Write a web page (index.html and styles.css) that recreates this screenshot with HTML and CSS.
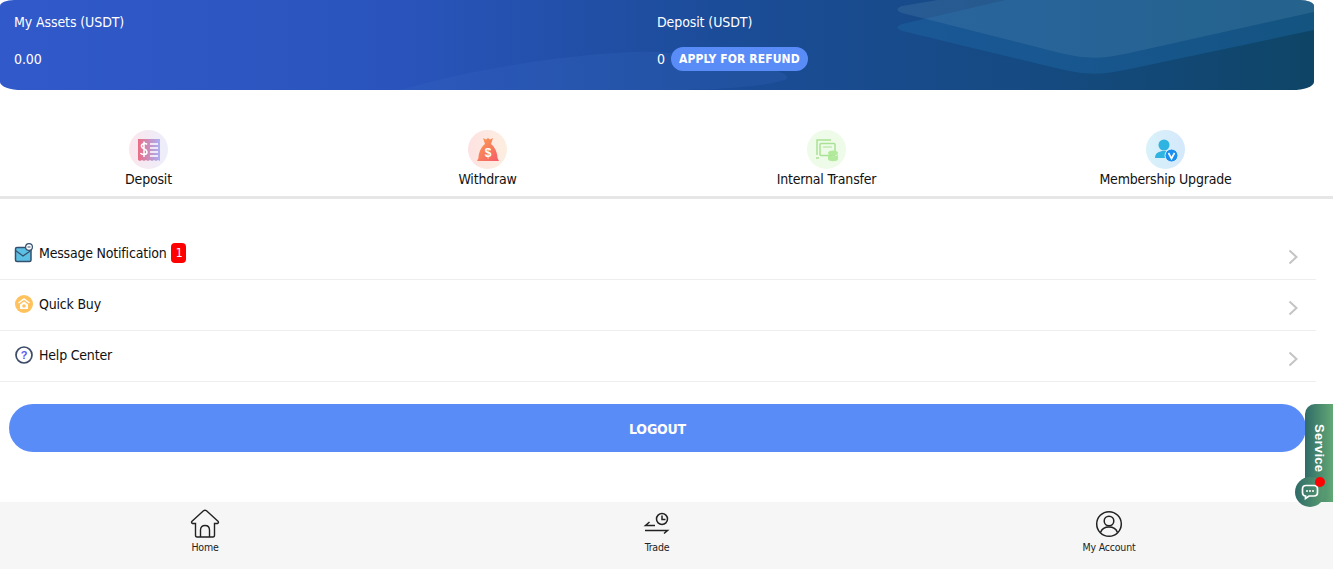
FILE: index.html
```html
<!DOCTYPE html>
<html lang="en">
<head>
    <meta charset="UTF-8">
    <meta name="viewport" content="width=device-width, initial-scale=1.0">
    <title>My Account</title>
    <link rel="stylesheet" href="styles.css">
</head>
<body>
    <div class="page">
        <!-- Saldo -->
        <div class="saldo">
            <svg class="saldo-bg" viewBox="0 0 1314 90" preserveAspectRatio="none">
                <path d="M902 24 C 896 26 896 29 902 31 L1060 69 C 1085 75 1100 75 1125 70 L1314 30 L1314 -8 L1040 -8 Z" fill="#1c6aa8" opacity=".42"/>
                <path d="M902 6 C 896 8 896 11 902 13 L1060 53 C 1085 59 1100 59 1125 54 L1314 12 L1314 -8 L985 -8 Z" fill="#6a9cb8" opacity=".2"/>
                <path d="M400 90 C 480 66 600 50 660 52 C 740 60 800 72 785 80 C 760 88 700 90 670 90 Z" fill="#3a6cc8" opacity=".2"/>
            </svg>
            <div class="saldo-col">
                <div class="saldo-label">My Assets (USDT)</div>
                <div class="saldo-value">0.00</div>
            </div>
            <div class="saldo-col">
                <div class="saldo-label">Deposit (USDT)</div>
                <div class="saldo-value">0 <span class="refund">APPLY FOR REFUND</span></div>
            </div>
        </div>

        <!-- Menu utama -->
        <div class="aksi">
            <div class="aksi-item">
                <div class="aksi-icon bg-pink">
                    <svg width="24" height="24" viewBox="0 0 24 24">
                        <defs><linearGradient id="g1" x1="0" x2="1"><stop offset="0" stop-color="#ea6d86"/><stop offset="1" stop-color="#a9b0f5"/></linearGradient></defs>
                        <path d="M1 1H23V23L21 22 19 23 17 22 15 23 13 22 11 23 9 22 7 23 5 22 3 23 1 22Z" fill="url(#g1)"/>
                        <path d="M10 6.500C9 5 4 5 4.500 8.500 5 11.500 10 10.500 10 14 10 17.500 4.500 17 3.500 15M7 3.500V19" fill="none" stroke="#fff" stroke-width="1.500"/>
                        <path d="M13 6H21M13 10H21M13 14H21M13 18H21" stroke="#fff" stroke-width="1.300"/>
                    </svg>
                </div>
                <span>Deposit</span>
            </div>
            <div class="aksi-item">
                <div class="aksi-icon bg-peach">
                    <svg width="24" height="26" viewBox="0 0 24 26">
                        <defs><linearGradient id="g2" x1="0" x2="1" y1="0" y2="1"><stop offset="0" stop-color="#f9a14f"/><stop offset="1" stop-color="#f7596b"/></linearGradient></defs>
                        <path d="M7 1L10 2.500 12 1 14 2.500 17 1 15 7C19 10 21.500 16 21.500 21L23 24H1L2.500 21C2.500 16 5 10 9 7Z" fill="url(#g2)"/>
                        <text x="12" y="20" class="bag-sign">$</text>
                    </svg>
                </div>
                <span>Withdraw</span>
            </div>
            <div class="aksi-item">
                <div class="aksi-icon bg-green">
                    <svg width="24" height="24" viewBox="0 0 24 24" fill="none" stroke="#a8e294" stroke-width="1.500">
                        <path d="M16 2H2V17"/>
                        <path d="M4 20H1"/>
                        <rect x="5" y="5.500" width="15" height="12" rx="1"/>
                        <path d="M8 9H17" stroke-width="1"/>
                        <ellipse cx="18" cy="15" rx="5" ry="2.500" fill="#b2ea9c" stroke="none"/>
                        <path d="M13 16V21C13 24 23 24 23 21V16C23 19 13 19 13 16Z" fill="#b2ea9c" stroke="none"/>
                    </svg>
                </div>
                <span>Internal Transfer</span>
            </div>
            <div class="aksi-item">
                <div class="aksi-icon bg-blue">
                    <svg width="24" height="24" viewBox="0 0 24 24">
                        <circle cx="10" cy="7" r="5.500" fill="#2fb3e0"/>
                        <path d="M1 20C1 15 5 13 10 13 14 13 17 15 17 20Z" fill="#2fb3e0"/>
                        <circle cx="17.500" cy="17.500" r="6.500" fill="#1b8fef" stroke="#d8effb"/>
                        <path d="M14.500 15L17.500 20.500 20.500 15" fill="none" stroke="#fff" stroke-width="1.600"/>
                    </svg>
                </div>
                <span>Membership Upgrade</span>
            </div>
        </div>

        <!-- Daftar menu -->
        <div class="daftar">
            <div class="baris">
                <svg class="baris-icon" width="20" height="20" viewBox="0 0 20 20">
                    <rect x="1.500" y="4.500" width="15.500" height="14" rx="1.500" fill="#5cc0e4" stroke="#34506e" stroke-width="1.500"/>
                    <path d="M1.500 7.500L9 13 17 7.500" fill="none" stroke="#34506e" stroke-width="1.200"/>
                    <circle cx="15" cy="4" r="3.400" fill="#fff" stroke="#34506e" stroke-width="1.200"/>
                    <path d="M13.500 4H16.500" stroke="#34506e"/>
                </svg>
                <span class="baris-text">Message Notification</span>
                <span class="badge">1</span>
                <svg class="panah" width="10" height="16" viewBox="0 0 10 16"><path d="M1.500 1.500L8.500 8 1.500 14.500" fill="none" stroke="#c4c4c4" stroke-width="2"/></svg>
            </div>
            <div class="baris">
                <svg class="baris-icon" width="20" height="20" viewBox="0 0 20 20">
                    <circle cx="10" cy="10" r="9" fill="#ffc25c"/>
                    <path d="M4.500 9L10 5 15.500 9" fill="none" stroke="#fff" stroke-width="1.500"/>
                    <path d="M6 10.500L10 7.500 14 10.500V15H6Z" fill="#fff"/>
                    <circle cx="10" cy="12" r="1.800" fill="#ffc25c"/>
                </svg>
                <span class="baris-text">Quick Buy</span>
                <svg class="panah" width="10" height="16" viewBox="0 0 10 16"><path d="M1.500 1.500L8.500 8 1.500 14.500" fill="none" stroke="#c4c4c4" stroke-width="2"/></svg>
            </div>
            <div class="baris">
                <svg class="baris-icon" width="20" height="20" viewBox="0 0 20 20">
                    <circle cx="10" cy="10" r="8" fill="#fff" stroke="#3d4a68" stroke-width="1.700"/>
                    <text x="10" y="14" class="tanya">?</text>
                </svg>
                <span class="baris-text">Help Center</span>
                <svg class="panah" width="10" height="16" viewBox="0 0 10 16"><path d="M1.500 1.500L8.500 8 1.500 14.500" fill="none" stroke="#c4c4c4" stroke-width="2"/></svg>
            </div>
        </div>

        <div class="logout">LOGOUT</div>

        <!-- Navigasi bawah -->
        <div class="nav">
            <div class="nav-item">
                <svg width="30" height="30" viewBox="0 0 30 30" fill="none" stroke="#222" stroke-width="1.400">
                    <path d="M7 28H23C24 28 24.500 27 24.500 26V14.500L27.500 14.500C28.500 14 28.800 13 28 12.200L16.500 1.800C15.500 1 14.500 1 13.500 1.800L2 12.200C1.200 13 1.500 14 2.500 14.500H5.500V26C5.500 27 6 28 7 28Z"/>
                    <path d="M10.500 28V21C10.500 18 12.500 16.500 15 16.500 17.500 16.500 19.500 18 19.500 21V28"/>
                </svg>
                <span>Home</span>
            </div>
            <div class="nav-item">
                <svg width="30" height="30" viewBox="0 0 30 30" fill="none" stroke="#222" stroke-width="1.500">
                    <circle cx="20" cy="10" r="5.500"/>
                    <path d="M20 6.500V10.500H23.500"/>
                    <path d="M13 16.500H3.500L7.500 13"/>
                    <path d="M3 21.500H25.500L22 24.500"/>
                </svg>
                <span>Trade</span>
            </div>
            <div class="nav-item">
                <svg width="30" height="30" viewBox="0 0 30 30" fill="none" stroke="#222" stroke-width="1.500">
                    <circle cx="15" cy="15" r="12.300"/>
                    <circle cx="15" cy="12" r="4.800"/>
                    <path d="M6.500 23.500C8 19.500 11 18 15 18 19 18 22 19.500 23.500 23.500"/>
                </svg>
                <span>My Account</span>
            </div>
        </div>
    </div>

    <!-- Tombol service melayang -->
    <div class="service">Service</div>
    <div class="chat">
        <svg width="18" height="16" viewBox="0 0 18 16">
            <path d="M5 1.500H13C15 1.500 16.500 3 16.500 5V8.500C16.500 10.500 15 12 13 12H8L4.500 14.500V12C2.500 12 1.500 10.500 1.500 8.500V5C1.500 3 3 1.500 5 1.500Z" fill="none" stroke="#fff" stroke-width="1.700"/>
            <circle cx="6" cy="7" r="1" fill="#fff"/>
            <circle cx="9" cy="7" r="1" fill="#fff"/>
            <circle cx="12" cy="7" r="1" fill="#fff"/>
        </svg>
        <span class="chat-dot"></span>
    </div>
</body>
</html>
```

FILE: styles.css
```css
body {
    margin: 0;
    font-family: 'DejaVu Sans Condensed', 'DejaVu Sans', sans-serif;
    font-size: 14px;
    letter-spacing: -0.2px;
    color: #111;
    background-color: #fff;
    overflow: hidden;
}
.page {
    height: 569px;
    display: flex;
    flex-direction: column;
}

/* Saldo */
.saldo {
    position: relative;
    width: 1314px;
    height: 90px;
    box-sizing: border-box;
    padding-left: 14px;
    display: grid;
    grid-template-columns: 643px 1fr;
    color: #fff;
    letter-spacing: -0.1px;
    background: linear-gradient(90deg, #3159ca 0%, #2a54bc 30%, #1b4c98 55%, #154a80 80%, #0e4566 100%);
    border-radius: 14px 14px 22px 22px / 6px 6px 8px 8px;
    overflow: hidden;
}
.saldo-bg {
    position: absolute;
    left: 0;
    top: 0;
    width: 100%;
    height: 100%;
}
.saldo-col {
    position: relative;
    padding-top: 12px;
}
.saldo-label {
    line-height: 20px;
}
.saldo-value {
    margin-top: 15px;
    line-height: 24px;
    display: flex;
    align-items: center;
    gap: 6px;
}
.refund {
    background-color: #5a8cf8;
    border-radius: 12px;
    height: 24px;
    line-height: 25px;
    padding: 0 8px;
    font-size: 12px;
    font-weight: 700;
    letter-spacing: 0.1px;
}

/* Menu utama */
.aksi {
    display: flex;
    justify-content: space-between;
    margin-top: 40px;
    padding: 0 67.5px 7px 48.5px;
    border-bottom: 3px solid #e6e6e6;
}
.aksi-item {
    width: 200px;
    display: flex;
    flex-direction: column;
    align-items: center;
}
.aksi-icon {
    width: 39px;
    height: 39px;
    border-radius: 50%;
    display: flex;
    align-items: center;
    justify-content: center;
}
.aksi-item span {
    line-height: 20px;
}
.bg-pink {
    background: linear-gradient(90deg, #fbe6ec, #eceefc);
}
.bg-peach {
    background: linear-gradient(90deg, #fde2e2, #fdeee0);
}
.bg-green {
    background-color: #effbe9;
}
.bg-blue {
    background: linear-gradient(90deg, #d9f2fa, #d4e8fb);
}
.bag-sign {
    font-family: 'Liberation Sans', sans-serif;
    font-size: 12px;
    font-weight: 700;
    fill: #fff;
    text-anchor: middle;
}

/* Daftar menu */
.daftar {
    width: 1316px;
    margin-top: 30px;
}
.baris {
    height: 50px;
    display: flex;
    align-items: center;
    padding: 0 18px 0 14px;
    border-bottom: 1px solid #eee;
}
.baris-text {
    margin-top: -3px;
}
.baris-icon {
    margin-right: 5px;
    margin-top: -3px;
}
.badge {
    margin-left: 5px;
    margin-top: -3px;
    background-color: #f00;
    color: #fff;
    font-size: 12px;
    line-height: 20px;
    width: 15px;
    text-align: center;
    border-radius: 4px;
}
.panah {
    margin-left: auto;
    margin-top: 5px;
}
.tanya {
    font-family: 'Liberation Sans', sans-serif;
    font-size: 11px;
    font-weight: 700;
    fill: #5a5af0;
    text-anchor: middle;
}

.logout {
    margin: 22px 27px 0 9px;
    height: 48px;
    line-height: 50px;
    text-align: center;
    color: #fff;
    font-weight: 700;
    background-color: #5a8cf8;
    border-radius: 24px;
}

/* Navigasi bawah */
.nav {
    margin-top: 50px;
    flex: 1;
    display: flex;
    justify-content: space-between;
    padding: 7px 174px 0 155px;
    background-color: #f6f6f6;
}
.nav-item {
    width: 100px;
    display: flex;
    flex-direction: column;
    align-items: center;
    font-size: 10.5px;
    letter-spacing: -0.2px;
    color: #222;
}
.nav-item span {
    margin-top: 1px;
    line-height: 14px;
}

/* Service */
.service {
    position: absolute;
    right: 0;
    top: 404px;
    width: 28px;
    height: 98px;
    box-sizing: border-box;
    padding-top: 20px;
    writing-mode: vertical-rl;
    text-align: left;
    line-height: 28px;
    font-family: 'Liberation Sans', sans-serif;
    font-size: 13px;
    font-weight: 700;
    letter-spacing: 0.3px;
    color: #fff;
    background: linear-gradient(90deg, #2f6b68, #62a874);
    border-radius: 10px 0 0 0;
}
.chat {
    position: absolute;
    left: 1295px;
    top: 477px;
    width: 30px;
    height: 30px;
    border-radius: 50%;
    background: linear-gradient(90deg, #2f6b68, #5a9c70);
    display: flex;
    align-items: center;
    justify-content: center;
}
.chat-dot {
    position: absolute;
    left: 20px;
    top: 0;
    width: 10px;
    height: 10px;
    border-radius: 50%;
    background-color: #f00;
}
```
